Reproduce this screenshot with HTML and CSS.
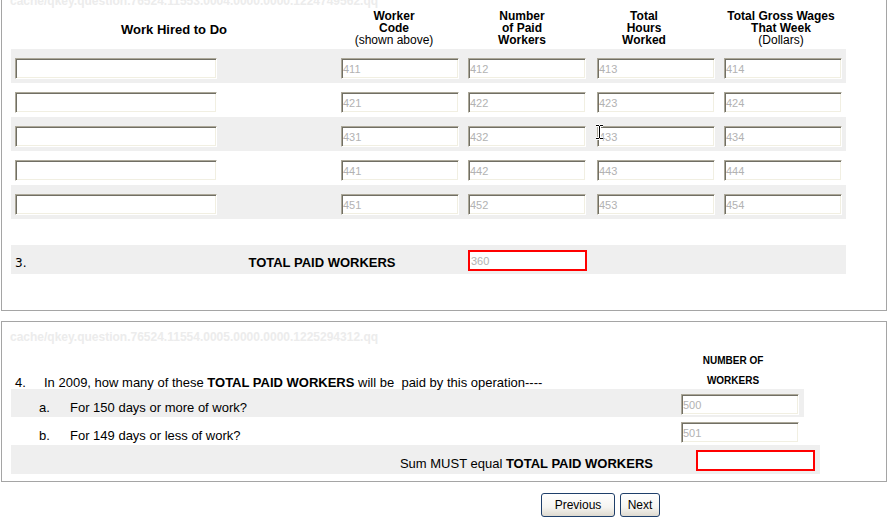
FILE: index.html
```html
<!DOCTYPE html>
<html lang="en">
<head>
  <meta charset="utf-8" />
  <title>Paid Workers</title>
  <link rel="stylesheet" href="styles.css">
</head>
<body>
  <div class="panel panel-top">
    <div class="qkey">cache/qkey.question.76524.11553.0004.0000.0000.1224749562.qq</div>
    <div class="head">
      <div class="head-main">Work Hired to Do</div>
      <div>Worker<br>Code<br><span class="plain">(shown above)</span></div>
      <div>Number<br>of Paid<br>Workers</div>
      <div>Total<br>Hours<br>Worked</div>
      <div>Total Gross Wages<br>That Week<br><span class="plain">(Dollars)</span></div>
    </div>
    <div class="work-rows">
      <div class="work-row shade">
        <input class="fld wide" type="text">
        <input class="fld" type="text" placeholder="411">
        <input class="fld" type="text" placeholder="412">
        <input class="fld" type="text" placeholder="413">
        <input class="fld" type="text" placeholder="414">
      </div>
      <div class="work-row">
        <input class="fld wide" type="text">
        <input class="fld" type="text" placeholder="421">
        <input class="fld" type="text" placeholder="422">
        <input class="fld" type="text" placeholder="423">
        <input class="fld" type="text" placeholder="424">
      </div>
      <div class="work-row shade">
        <input class="fld wide" type="text">
        <input class="fld" type="text" placeholder="431">
        <input class="fld" type="text" placeholder="432">
        <input class="fld" type="text" placeholder="433">
        <input class="fld" type="text" placeholder="434">
      </div>
      <div class="work-row">
        <input class="fld wide" type="text">
        <input class="fld" type="text" placeholder="441">
        <input class="fld" type="text" placeholder="442">
        <input class="fld" type="text" placeholder="443">
        <input class="fld" type="text" placeholder="444">
      </div>
      <div class="work-row shade">
        <input class="fld wide" type="text">
        <input class="fld" type="text" placeholder="451">
        <input class="fld" type="text" placeholder="452">
        <input class="fld" type="text" placeholder="453">
        <input class="fld" type="text" placeholder="454">
      </div>
    </div>
    <div class="total-row shade">
      <div class="num3">3.</div>
      <div class="total-label">TOTAL PAID WORKERS</div>
      <input class="fld-red" type="text" placeholder="360">
    </div>
  </div>

  <div class="panel panel-bottom">
    <div class="qkey">cache/qkey.question.76524.11554.0005.0000.0000.1225294312.qq</div>
    <div class="q-row">
      <div class="q-text"><span class="q-num">4.</span>In 2009, how many of these <b>TOTAL PAID WORKERS</b> will be &nbsp;paid by this operation----</div>
      <div class="col-head">NUMBER OF<br>WORKERS</div>
    </div>
    <div class="sub-row shade">
      <span class="sub-letter">a.</span>For 150 days or more of work?
      <input class="fld" type="text" placeholder="500">
    </div>
    <div class="sub-row">
      <span class="sub-letter">b.</span>For 149 days or less of work?
      <input class="fld" type="text" placeholder="501">
    </div>
    <div class="sum-row shade">
      <span>Sum MUST equal <b>TOTAL PAID WORKERS</b></span>
      <input class="fld-red" type="text">
    </div>
  </div>

  <div class="nav">
    <button class="btn btn-prev" type="button">Previous</button>
    <button class="btn btn-next" type="button">Next</button>
  </div>

  <!-- mouse cursor sitting over field 433 -->
  <svg class="ibeam" width="9" height="16" viewBox="0 0 9 16">
    <path d="M1 1.5h3M5 1.5h3M4.5 2v12M1 14.5h3M5 14.5h3" stroke="#fff" stroke-width="3" fill="none"/>
    <path d="M1 1.5h3M5 1.5h3M4.5 2v12M1 14.5h3M5 14.5h3" stroke="#000" stroke-width="1" fill="none"/>
  </svg>
</body>
</html>
```

FILE: styles.css
```css
body {
  margin: 0;
  font-family: "Liberation Sans", Arial, sans-serif;
  font-size: 13px;
  color: #000;
  background: #fff;
  overflow: hidden;
}
.panel {
  box-sizing: border-box;
  width: 886px;
  margin-left: 1px;
  border: 1px solid #a5a5a5;
}
.panel-top {
  margin-top: -7px;
  padding: 0 0 36px 9px;
}
.panel-bottom {
  margin-top: 10px;
  padding: 8px 0 7px 9px;
}
.qkey {
  margin-left: -1px;
  font-size: 12px;
  font-weight: bold;
  line-height: 14px;
  color: #ececec;
  white-space: nowrap;
}
.shade {
  background: #efefef;
}

/* cabecalho da tabela */
.head {
  display: grid;
  grid-template-columns: 326px 114px 142px 102px 172px;
  align-items: center;
  margin-top: 2px;
  font-size: 12px;
  font-weight: bold;
  line-height: 12px;
  text-align: center;
}
.head .head-main {
  padding-top: 2px;
  font-size: 13px;
  line-height: 15px;
}
.head .plain {
  font-weight: normal;
}
.work-rows {
  margin-top: 3px;
}
.work-row {
  display: grid;
  grid-template-columns: 330px 127px 129px 127px 122px;
  align-items: start;
  box-sizing: border-box;
  width: 835px;
  height: 34px;
  padding-top: 9px;
}

/* campos */
.fld {
  box-sizing: border-box;
  width: 118px;
  height: 21px;
  margin: 0;
  padding: 0 0 0 1px;
  border: 1px solid;
  border-color: #aca899 #fff #fff #aca899;
  box-shadow: inset 1px 1px 0 #716f64, inset -1px -1px 0 #f1efe2;
  background: #fff;
  font-family: "Liberation Sans", Arial, sans-serif;
  font-size: 11px;
}
.fld.wide {
  width: 202px;
  margin-left: 4px;
}
.fld::placeholder,
.fld-red::placeholder {
  color: #b2b2b2;
  opacity: 1;
}
.fld-red {
  box-sizing: border-box;
  width: 119px;
  height: 21px;
  margin: 0;
  padding: 0 0 0 1px;
  border: 2px solid #ff0000;
  background: #fff;
  font-family: "Liberation Sans", Arial, sans-serif;
  font-size: 11px;
}

/* linha do total */
.total-row {
  display: grid;
  grid-template-columns: 190px 242px auto;
  align-items: end;
  box-sizing: border-box;
  width: 835px;
  height: 29px;
  margin-top: 26px;
  padding-bottom: 3px;
}
.num3 {
  padding-left: 4px;
  font-family: "DejaVu Sans", Verdana, sans-serif;
  font-size: 12px;
  line-height: 15px;
}
.total-label {
  padding-bottom: 1px;
  font-weight: bold;
  line-height: 15px;
  text-align: center;
}
.total-row .fld-red {
  margin-left: 25px;
}

/* pergunta 4 */
.q-row {
  display: grid;
  grid-template-columns: 1fr 118px;
  align-items: end;
  box-sizing: border-box;
  width: 793px;
  height: 38px;
  margin-top: 7px;
  padding-right: 12px;
}
.q-text {
  margin-bottom: -1px;
  padding-left: 4px;
  line-height: 14px;
  white-space: nowrap;
}
.q-num {
  display: inline-block;
  width: 29px;
}
.col-head {
  margin-bottom: -2px;
  font-size: 10px;
  font-weight: bold;
  line-height: 20px;
  text-align: center;
}
.sub-row {
  display: flex;
  align-items: flex-end;
  box-sizing: border-box;
  width: 793px;
  height: 28px;
  padding: 0 5px 2px 28px;
  line-height: 15px;
}
.sub-letter {
  display: inline-block;
  width: 31px;
}
.sub-row .fld {
  margin-left: auto;
}
.sum-row {
  display: flex;
  align-items: flex-end;
  justify-content: flex-end;
  box-sizing: border-box;
  width: 809px;
  height: 29px;
  padding: 0 5px 3px 0;
  line-height: 15px;
}
.sum-row .fld-red {
  margin-left: 43px;
}

/* botoes */
.nav {
  display: flex;
  gap: 5px;
  margin-top: 11px;
  padding-left: 541px;
}
.btn {
  height: 24px;
  padding: 0;
  border: 1px solid #1f3f6a;
  border-radius: 3px;
  background: linear-gradient(#ffffff, #f6f5f1 60%, #dedad0);
  color: #000;
  font-family: "Liberation Sans", Arial, sans-serif;
  font-size: 12px;
  cursor: pointer;
}
.btn-prev {
  width: 74px;
}
.btn-next {
  width: 40px;
}
.ibeam {
  position: absolute;
  left: 595px;
  top: 124px;
}
```
